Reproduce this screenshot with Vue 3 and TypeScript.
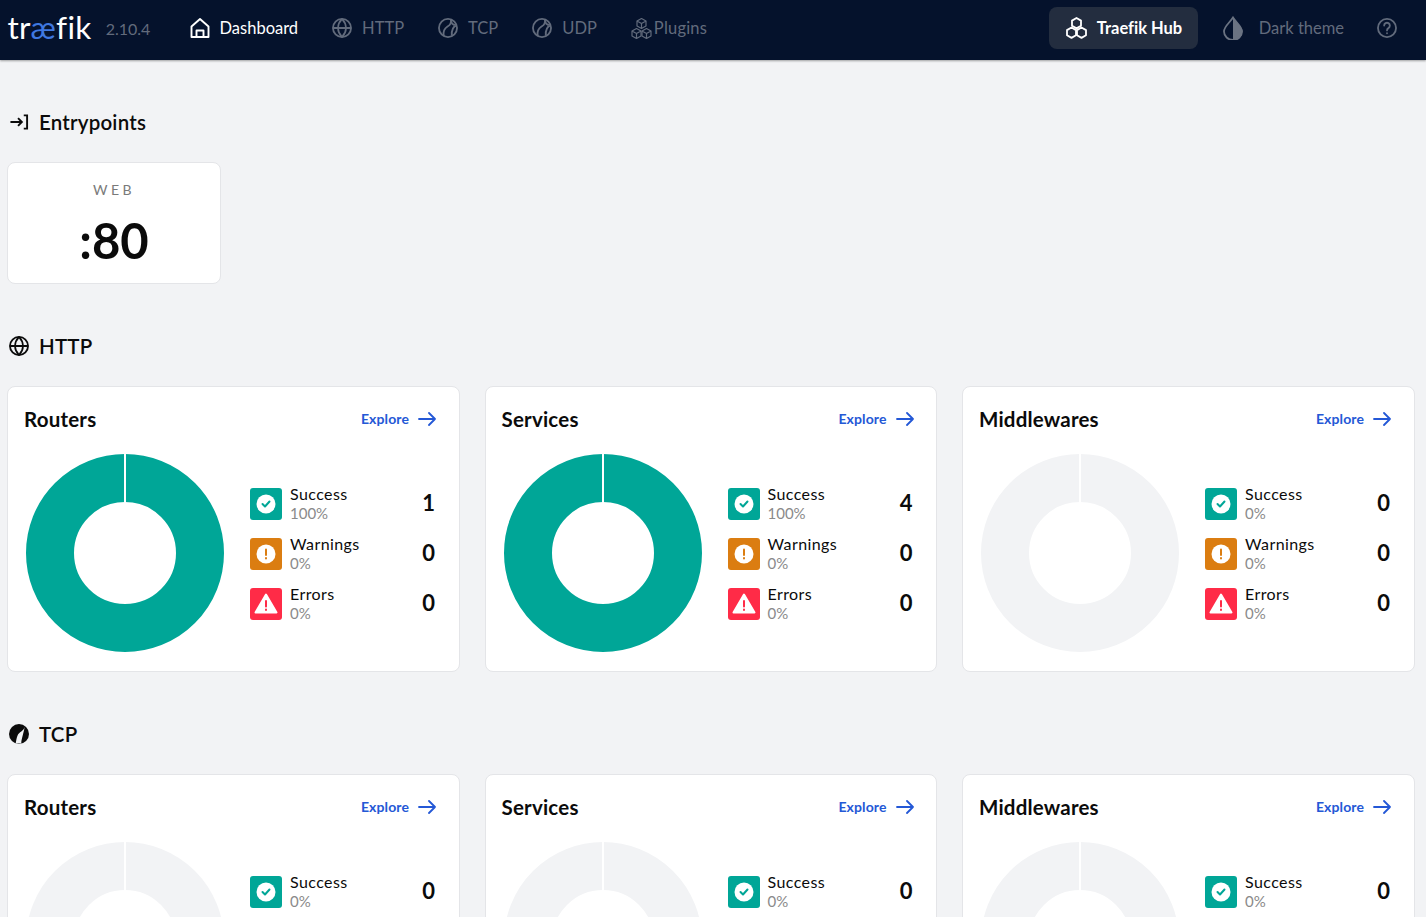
<script setup lang="ts">
interface Stat { label: string; pct: string; count: number; kind: 'ok' | 'warn' | 'err' }
interface Card { title: string; stats: Stat[]; full: boolean }
interface Section { name: string; icon: 'globe' | 'ball'; cards: Card[] }

const mk = (title: string, success: number): Card => ({
  title,
  full: success > 0,
  stats: [
    { label: 'Success', pct: success > 0 ? '100%' : '0%', count: success, kind: 'ok' },
    { label: 'Warnings', pct: '0%', count: 0, kind: 'warn' },
    { label: 'Errors', pct: '0%', count: 0, kind: 'err' },
  ],
})

const sections: Section[] = [
  { name: 'HTTP', icon: 'globe', cards: [mk('Routers', 1), mk('Services', 4), mk('Middlewares', 0)] },
  { name: 'TCP', icon: 'ball', cards: [mk('Routers', 0), mk('Services', 0), mk('Middlewares', 0)] },
]
</script>

<template>
  <div class="app">
    <header class="topbar">
      <div class="brand">
        <span class="logo">tr<span class="logo-ae">æ</span>fik</span>
        <span class="version">2.10.4</span>
      </div>
      <nav class="nav">
        <a class="nav-item active">
          <svg class="nav-icon" viewBox="2 2 20 20" fill="none" stroke="currentColor" stroke-width="1.900" stroke-linejoin="round"><path d="M3.500 10.500 12 3l8.500 7.500V21h-17z"/><path d="M8.500 21v-6.500h7V21"/></svg>
          Dashboard
        </a>
        <a class="nav-item">
          <svg class="nav-icon" viewBox="1.500 1.500 21 21" fill="none" stroke="currentColor" stroke-width="1.900"><circle cx="12" cy="12" r="9.500"/><path d="M2.500 12h19M12 2.500c-5.500 6-5.500 13 0 19M12 2.500c5.500 6 5.500 13 0 19"/></svg>
          HTTP
        </a>
        <a class="nav-item">
          <svg class="nav-icon" viewBox="1.500 1.500 21 21" fill="none" stroke="currentColor" stroke-width="1.900"><circle cx="12" cy="12" r="9.500"/><path d="M15 3c.8 3.500-1 6-3.500 7.500S6.500 14.500 7.500 20.500"/><path d="M15.500 3.500c-.5 3 1 5.500 5.500 5.500M21 9c-3.500 1.500-5.500 5-5 11"/></svg>
          TCP
        </a>
        <a class="nav-item">
          <svg class="nav-icon" viewBox="1.500 1.500 21 21" fill="none" stroke="currentColor" stroke-width="1.900"><circle cx="12" cy="12" r="9.500"/><path d="M15 3c.8 3.500-1 6-3.500 7.500S6.500 14.500 7.500 20.500"/><path d="M15.500 3.500c-.5 3 1 5.500 5.500 5.500M21 9c-3.500 1.500-5.500 5-5 11"/></svg>
          UDP
        </a>
        <a class="nav-item plugins">
          <svg class="plugin-icon" viewBox="2 2 20 21" fill="none" stroke="currentColor" stroke-width="1.200" stroke-linejoin="round"><path d="M12 2.500l4.500 2.500v5L12 12.500 7.500 10V5zM7.500 5 12 7.500 16.500 5M12 7.500v5"/><path d="M7 12.500l4.500 2.500v5L7 22.500 2.500 20v-5zM2.500 15 7 17.500 11.500 15M7 17.500v5"/><path d="M17 12.500l4.500 2.500v5L17 22.500 12.500 20v-5zM12.500 15l4.500 2.500 4.500-2.500M17 17.500v5"/></svg>
          Plugins
        </a>
      </nav>
      <div class="right">
        <a class="hub">
          <svg class="hub-icon" viewBox="2.500 1 21 22" fill="none" stroke="currentColor" stroke-width="1.800" stroke-linejoin="round"><path d="M13 2l4.500 2.600v5.200L13 12.400 8.500 9.800V4.600z"/><path d="M8 11.500l4.500 2.600v5.200L8 21.900l-4.500-2.600v-5.200z"/><path d="M18 11.500l4.500 2.600v5.200L18 21.900l-4.500-2.600v-5.200z"/></svg>
          Traefik Hub
        </a>
        <a class="theme">
          <svg class="drop" viewBox="0 0 20 24"><path d="M10 1.500C6.500 7 1 10.500 1 15.500a9 8.500 0 0 0 18 0C19 10.500 13.500 7 10 1.500z" fill="none" stroke="#6b7382" stroke-width="1.800"/><path d="M10 1.500V24a9 8.500 0 0 0 9.500-8.500C19.500 10.500 13.500 7 10 1.500z" fill="#6b7382"/></svg>
          Dark theme
        </a>
        <svg class="help" viewBox="1.500 1.500 21 21" fill="none" stroke="currentColor" stroke-width="1.900" stroke-linecap="round"><circle cx="12" cy="12" r="9.500"/><path d="M9 9.500a3 3 0 1 1 4.500 2.600c-1 .6-1.500 1.200-1.500 2.400"/><path d="M12 17.500v.01"/></svg>
      </div>
    </header>

    <main class="page">
      <h2 class="heading entry-heading">
        <svg class="head-icon" viewBox="1.500 1.500 21 21" fill="none" stroke="#0b0b0b" stroke-width="2"><path d="M3 12h12M11 8l4 4-4 4M17 5h3.500v14H17"/></svg>
        Entrypoints
      </h2>
      <div class="entry-card">
        <div class="entry-name">WEB</div>
        <div class="entry-port">:80</div>
      </div>

      <section v-for="s in sections" :key="s.name" class="section">
        <h2 class="heading">
          <svg v-if="s.icon === 'globe'" class="head-icon" viewBox="1.500 1.500 21 21" fill="none" stroke="#0b0b0b" stroke-width="1.900"><circle cx="12" cy="12" r="9.500"/><path d="M2.500 12h19M12 2.500c-5.500 6-5.500 13 0 19M12 2.500c5.500 6 5.500 13 0 19"/></svg>
          <svg v-else class="head-icon" viewBox="1.500 1.500 21 21"><circle cx="12" cy="12" r="10.500" fill="#0b0b0b"/><path d="M18 4.500c-1 4.500-6 5.500-7.500 9-1 2.500-1.500 5.500-2 8.500h6c-.5-3 2-9 3.500-17.500z" fill="#f2f3f5"/></svg>
          {{ s.name }}
        </h2>
        <div class="grid">
          <article v-for="c in s.cards" :key="c.title" class="card">
            <div class="card-head">
              <h3 class="card-title">{{ c.title }}</h3>
              <a class="explore">
                Explore
                <svg class="arrow" viewBox="0.200 0 17.600 14" fill="none" stroke="currentColor" stroke-width="1.800" stroke-linecap="round" stroke-linejoin="round"><path d="M1 7h16M11 1l6 6-6 6"/></svg>
              </a>
            </div>
            <div class="card-body">
              <svg class="donut" viewBox="0 0 200 200">
                <circle cx="100" cy="100" r="75" fill="none" :stroke="c.full ? '#00a697' : '#f2f3f5'" stroke-width="48"/>
                <rect x="99" y="0" width="2" height="51" fill="#fff"/>
              </svg>
              <ul class="stats">
                <li v-for="st in c.stats" :key="st.label" class="stat">
                  <span class="badge" :class="st.kind">
                    <svg v-if="st.kind === 'ok'" viewBox="0 0 32 32" class="badge-icon"><circle cx="16" cy="16" r="9.500" fill="#fff"/><path d="M12.500 16l2.500 2.500 4.500-5" fill="none" stroke="#00a697" stroke-width="2" stroke-linecap="round" stroke-linejoin="round"/></svg>
                    <svg v-else-if="st.kind === 'warn'" viewBox="0 0 32 32" class="badge-icon"><circle cx="16" cy="16" r="9.500" fill="#fff"/><path d="M16 11.500v5.500M16 20v.5" fill="none" stroke="#db7d11" stroke-width="2" stroke-linecap="round"/></svg>
                    <svg v-else viewBox="0 0 32 32" class="badge-icon"><path d="M16 6.500 26.500 24.500h-21z" fill="#fff" stroke="#fff" stroke-width="2" stroke-linejoin="round"/><path d="M16 13v5.500M16 21.500v.5" fill="none" stroke="#ff2b47" stroke-width="2" stroke-linecap="round"/></svg>
                  </span>
                  <span class="stat-text">
                    <span class="stat-label">{{ st.label }}</span>
                    <span class="stat-pct">{{ st.pct }}</span>
                  </span>
                  <span class="stat-count">{{ st.count }}</span>
                </li>
              </ul>
            </div>
          </article>
        </div>
      </section>
    </main>
  </div>
</template>

<style>
html, body { margin: 0; height: 917px; overflow: hidden; background: #f2f3f5; }
</style>

<style scoped>
.app { font-family: "Lato", "Open Sans", sans-serif; color: #0b0b0b; height: 917px; overflow: hidden; font-variant-ligatures: none; }
.topbar { height: 60px; box-sizing: border-box; background: #05122c; display: flex; align-items: center; padding: 0 29px 4px 7.500px; box-shadow: 0 1px 2px rgba(0,0,0,.35); position: relative; font-size: 16px; }
.brand { display: flex; align-items: center; width: 167.500px; flex: none; }
.logo { color: #fff; font-size: 31.500px; line-height: 1; letter-spacing: .3px; }
.logo-ae { color: #3f78e0; }
.version { color: #626b7c; font-size: 16px; margin-left: 14px; }
.nav { display: flex; align-items: center; gap: 34px; flex: 1; margin-left: 14.500px; }
.nav-item { display: flex; align-items: center; gap: 10px; color: #626b7c; font-size: 16.500px; }
.nav-item.active { color: #fff; }
.nav-icon { width: 20px; height: 20px; }
.plugins { gap: 2px; letter-spacing: .2px; }
.plugin-icon { width: 21px; height: 21px; }
.right { display: flex; align-items: center; }
.hub { display: flex; align-items: center; gap: 8px; height: 42px; width: 149px; box-sizing: border-box; padding-left: 15px; background: #232d3f; border-radius: 8px; color: #fff; font-weight: 700; font-size: 16.500px; }
.hub-icon { width: 25px; height: 22px; }
.theme { display: flex; align-items: center; gap: 16px; margin-left: 25px; color: #626b7c; font-size: 16.500px; }
.drop { width: 20px; height: 24px; }
.help { width: 20px; height: 20px; margin-left: 33px; color: #626b7c; }
.page { padding: 0 12px 0 7px; }
.heading { display: flex; align-items: center; gap: 10px; margin: 0; font-size: 20.500px; font-weight: 600; height: 24px; line-height: 24px; letter-spacing: .2px; }
.entry-heading { padding-top: 50px; }
.head-icon { width: 20px; height: 20px; flex: none; margin-left: 2px; }
.entry-card { width: 214px; height: 122px; box-sizing: border-box; margin-top: 28px; background: #fff; border: 1px solid #e4e5e8; border-radius: 8px; text-align: center; }
.entry-name { font-size: 14px; letter-spacing: 3.500px; color: #7a7a7a; margin-top: 18px; line-height: 17px; }
.entry-port { font-size: 49px; font-weight: 700; line-height: 58px; margin-top: 13px; }
.section { margin-top: 50px; }
.grid { display: flex; gap: 25px; margin-top: 28px; }
.section + .section { margin-top: 50px; }
.card { width: 452.500px; height: 286px; box-sizing: border-box; background: #fff; border: 1px solid #e4e5e8; border-radius: 8px; padding: 0 23.500px 0 16px; flex: none; }
.card-head { display: flex; justify-content: space-between; align-items: center; height: 64px; }
.card-title { margin: 0; font-size: 20.500px; font-weight: 700; letter-spacing: .2px; }
.explore { display: flex; align-items: center; gap: 9px; color: #2458d6; font-size: 14px; font-weight: 700; letter-spacing: .1px; margin: 0 -1px 1px 0; }
.arrow { width: 18px; height: 14px; }
.card-body { display: flex; align-items: flex-start; }
.donut { width: 200px; height: 200px; margin: 2px 0 0 1px; flex: none; }
.stats { list-style: none; margin: 28px 0 0 25px; padding: 0; flex: 1; }
.stat { display: flex; align-items: center; height: 50px; }
.badge { width: 32px; height: 32px; border-radius: 3px; flex: none; display: block; }
.badge.ok { background: #00a697; }
.badge.warn { background: #db7d11; }
.badge.err { background: #ff2b47; }
.badge-icon { width: 32px; height: 32px; display: block; }
.stat-text { display: flex; flex-direction: column; margin-left: 8px; flex: 1; padding-bottom: 2px; }
.stat-label { font-size: 16px; line-height: 20px; letter-spacing: .4px; }
.stat-pct { font-size: 15px; line-height: 19px; color: #8a8a8a; }
.stat-count { font-size: 22px; font-weight: 700; padding-bottom: 4px; }
</style>
